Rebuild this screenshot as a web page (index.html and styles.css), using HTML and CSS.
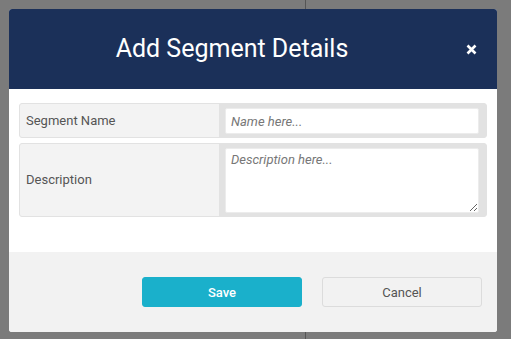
FILE: index.html
```html
<!DOCTYPE html>
<html lang="en">
<head>
<meta charset="UTF-8" />
<meta name="viewport" content="width=device-width, initial-scale=1.0" />
<title>Add Segment Details</title>
<link rel="stylesheet" href="styles.css">
</head>
<body>

<div class="modal">
  <div class="modal-header">
    <h2 class="modal-title">Add Segment Details</h2>
    <button class="close-btn" aria-label="Close">
      <svg width="11" height="11" viewBox="0 0 11 11">
        <path d="M1.5 1.5 L9.5 9.5 M9.5 1.5 L1.5 9.5" stroke="#fff" stroke-width="2.6" stroke-linecap="butt" />
      </svg>
    </button>
  </div>

  <div class="modal-body">
    <div class="form-row">
      <label class="form-label" for="segName">Segment Name</label>
      <div class="form-field">
        <input type="text" id="segName" placeholder="Name here..." />
      </div>
    </div>
    <div class="form-row">
      <label class="form-label" for="segDesc">Description</label>
      <div class="form-field">
        <textarea id="segDesc" placeholder="Description here..."></textarea>
      </div>
    </div>
  </div>

  <div class="modal-footer">
    <button class="btn btn-save">Save</button>
    <button class="btn btn-cancel">Cancel</button>
  </div>
</div>

</body>
</html>
```

FILE: styles.css
```css
html, body {
  height: 100%;
}
body {
  margin: 0;
  padding: 9px 14px 0 9px;
  box-sizing: border-box;
  background: linear-gradient(to right, transparent 305px, #555 305px, #555 306px, transparent 306px), #7b7b7b;
  font-family: Roboto, "Liberation Sans", sans-serif;
}
.modal {
  width: 488px;
  background: #fff;
  border-radius: 3px;
  overflow: hidden;
}
.modal-header {
  height: 80px;
  background: #1b3059;
  display: flex;
  align-items: center;
  padding: 0 20px;
  gap: 30px;
}
.modal-title {
  flex: 1;
  margin: 0;
  text-align: center;
  color: #fff;
  font-size: 25px;
  font-weight: 400;
  padding-bottom: 1px;
}
.close-btn {
  width: 12px;
  height: 12px;
  padding: 0;
  border: none;
  background: none;
  display: flex;
  align-items: center;
  justify-content: center;
  cursor: pointer;
}
.modal-body {
  padding: 14px 10px 35px;
  display: flex;
  flex-direction: column;
  gap: 5px;
}
.form-row {
  display: flex;
  border: 1px solid #e2e2e2;
  border-radius: 3px;
  overflow: hidden;
  background: #e2e2e2;
}
.form-label {
  width: 199px;
  background: #f3f3f3;
  color: #555;
  font-size: 13px;
  display: flex;
  align-items: center;
  padding: 0 0 1px 6px;
  box-sizing: border-box;
}
.form-field {
  flex: 1;
  padding: 4px 7px 3px 6px;
}
.form-field input,
.form-field textarea {
  display: block;
  width: 100%;
  box-sizing: border-box;
  border: 1px solid #ececec;
  border-radius: 2px;
  background: #fff;
  font-family: Roboto, "Liberation Sans", sans-serif;
  font-size: 13px;
  color: #333;
  padding: 3px 5px;
}
.form-field input {
  height: 26px;
}
.form-field textarea {
  height: 65px;
  resize: vertical;
}
.form-field input::placeholder,
.form-field textarea::placeholder {
  color: #777;
  font-style: italic;
}
.modal-footer {
  height: 80px;
  background: #f2f2f2;
  display: flex;
  align-items: center;
  justify-content: flex-end;
  gap: 20px;
  padding: 0 15px 0 0;
}
.btn {
  width: 160px;
  height: 30px;
  border-radius: 3px;
  font-family: Roboto, "Liberation Sans", sans-serif;
  font-size: 13px;
  cursor: pointer;
}
.btn-save {
  background: #1ab0cb;
  border: 1px solid #1ab0cb;
  color: #fff;
  font-weight: 500;
}
.btn-cancel {
  background: #f2f2f2;
  border: 1px solid #dcdcdc;
  color: #555;
}
```
